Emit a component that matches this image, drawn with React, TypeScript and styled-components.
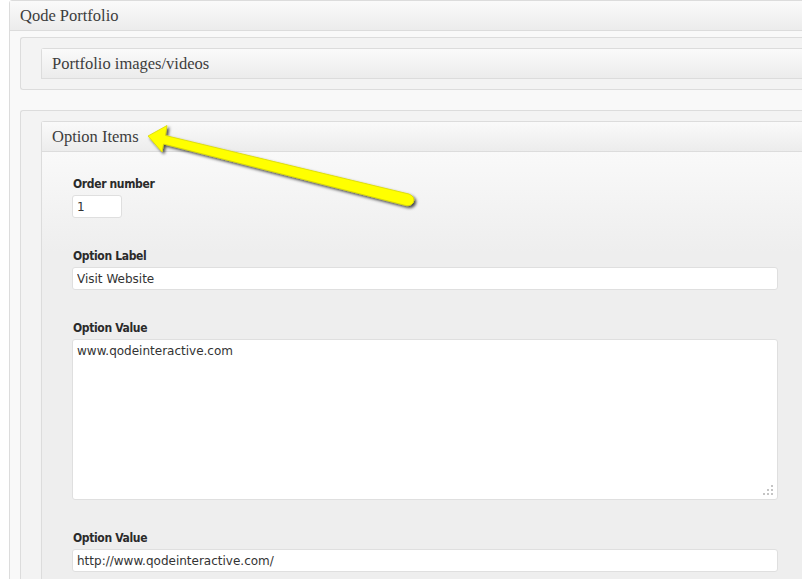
import styled, { createGlobalStyle } from "styled-components";

const Global = createGlobalStyle`
  html, body {
    margin: 0;
    padding: 0;
    background: #fff;
  }
`;

const Page = styled.div`
  width: 802px;
  height: 579px;
  overflow: hidden;
  position: relative;
  padding-left: 9px;
  box-sizing: border-box;
`;

const Box = styled.div`
  width: 820px;
  border: 1px solid #dcdcdc;
  border-radius: 3px 3px 0 0;
  background: #f9f9f9;
`;

const Header = styled.div`
  height: 29px;
  line-height: 29px;
  padding-left: 10px;
  background: linear-gradient(#fafafa, #ececec);
  border-bottom: 1px solid #dcdcdc;
  font-family: "Liberation Serif", "Times New Roman", serif;
  font-size: 16.5px;
  color: #3d3d3d;
`;

const Body = styled.div`
  padding: 6px 0 0 10px;
`;

const SubBox = styled.div<{ $gap?: number }>`
  margin-top: ${(p) => p.$gap ?? 0}px;
  border: 1px solid #dcdcdc;
  border-right: none;
  border-radius: 3px 0 0 3px;
  background: #f3f3f3;
  padding: 10px 0 10px 20px;
`;

const Panel = styled.div`
  border: 1px solid #dcdcdc;
  border-right: none;
  border-bottom: none;
  border-radius: 3px 0 0 0;
  background: #f9f9f9;
`;

const Content = styled.div`
  background: linear-gradient(#f9f9f9 0px, #eeeeee 100px, #eeeeee);
  padding: 25px 0 40px 30px;
`;

const Field = styled.div`
  margin-bottom: 31px;
`;

const Label = styled.label`
  display: block;
  font-family: "DejaVu Sans Condensed", "DejaVu Sans", sans-serif;
  font-weight: bold;
  font-size: 12px;
  letter-spacing: -0.35px;
  line-height: 14px;
  color: #2a2a2a;
  margin-bottom: 4px;
  padding-left: 1px;
`;

const TextInput = styled.input<{ $w: number }>`
  display: block;
  box-sizing: border-box;
  width: ${(p) => p.$w}px;
  height: 23px;
  border: 1px solid #dfdfdf;
  border-radius: 3px;
  background: #fff;
  padding: 0 4px;
  font-family: "DejaVu Sans", Verdana, sans-serif;
  font-size: 12px;
  color: #333;
  outline: none;
`;

const AreaWrap = styled.div`
  position: relative;
  width: 706px;
  height: 161px;
`;

const TextArea = styled.textarea`
  display: block;
  box-sizing: border-box;
  width: 100%;
  height: 100%;
  resize: none;
  border: 1px solid #dfdfdf;
  border-radius: 3px;
  background: #fff;
  padding: 4px 4px;
  margin: 0;
  font-family: "DejaVu Sans", Verdana, sans-serif;
  font-size: 12px;
  line-height: 15px;
  color: #333;
  outline: none;
`;

const Grip = styled.svg`
  position: absolute;
  right: 5px;
  bottom: 5px;
`;

const Arrow = styled.svg`
  position: absolute;
  left: 0;
  top: 0;
  pointer-events: none;
`;

export default function App() {
  return (
    <>
      <Global />
      <Page>
        <Box>
          <Header>Qode Portfolio</Header>
          <Body>
            <SubBox>
              <Panel>
                <Header>Portfolio images/videos</Header>
              </Panel>
            </SubBox>
            <SubBox $gap={20}>
              <Panel>
                <Header>Option Items</Header>
                <Content>
                  <Field>
                    <Label>Order number</Label>
                    <TextInput $w={50} defaultValue="1" />
                  </Field>
                  <Field>
                    <Label>Option Label</Label>
                    <TextInput $w={706} defaultValue="Visit Website" />
                  </Field>
                  <Field>
                    <Label>Option Value</Label>
                    <AreaWrap>
                      <TextArea defaultValue="www.qodeinteractive.com" />
                      <Grip width="10" height="10" viewBox="0 0 10 10">
                        <g fill="#c4c4c4">
                          <rect x="8" y="0" width="2" height="2" />
                          <rect x="4" y="4" width="2" height="2" />
                          <rect x="8" y="4" width="2" height="2" />
                          <rect x="0" y="8" width="2" height="2" />
                          <rect x="4" y="8" width="2" height="2" />
                          <rect x="8" y="8" width="2" height="2" />
                        </g>
                      </Grip>
                    </AreaWrap>
                  </Field>
                  <Field>
                    <Label>Option Value</Label>
                    <TextInput $w={706} defaultValue="http://www.qodeinteractive.com/" />
                  </Field>
                </Content>
              </Panel>
            </SubBox>
          </Body>
        </Box>
        <Arrow width="802" height="579" viewBox="0 0 802 579">
          <defs>
            <filter id="shadow" x="-10%" y="-20%" width="130%" height="160%">
              <feDropShadow dx="2" dy="2" stdDeviation="1.6" floodColor="#000" floodOpacity="0.7" />
            </filter>
          </defs>
          <g filter="url(#shadow)">
            <path
              d="M148 136 L167 125.5 L165.5 135.5 L409 194 Q416 197 413 203 Q410 207 404 205 L163.5 144 L162 152 Z"
              fill="#ffff00"
              stroke="#d8d800"
              strokeWidth="0.8"
              strokeLinejoin="round"
            />
          </g>
        </Arrow>
      </Page>
    </>
  );
}
